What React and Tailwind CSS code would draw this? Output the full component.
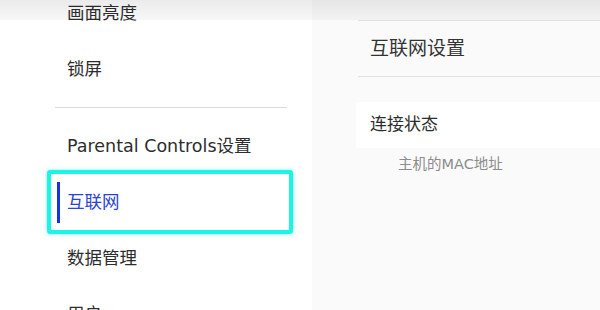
export default function App() {
  const font = { fontFamily: '"DejaVu Sans", "Noto Sans CJK SC", sans-serif' };

  return (
    <div className="relative w-[600px] h-[310px] overflow-hidden bg-white flex text-[#2d2d2d]" style={font}>
      {/* header fade */}
      <div className="absolute top-0 left-0 right-0 h-[20px] bg-gradient-to-b from-black/[0.08] to-black/[0.03] pointer-events-none z-10" />

      {/* Left menu */}
      <div className="w-[312px] flex flex-col mt-[-15px]">
        <div className="ml-[55px] w-[232px] h-14 shrink-0 flex items-center pl-3 text-[17.5px]">画面亮度</div>
        <div className="ml-[55px] w-[232px] h-14 shrink-0 flex items-center pl-3 text-[17.5px]">锁屏</div>
        <div className="ml-[55px] w-[232px] h-[21px] shrink-0 flex items-center">
          <div className="w-full h-px bg-[#dcdcdc]" />
        </div>
        <div className="ml-[55px] w-[232px] h-14 shrink-0 flex items-center pl-3 text-[17.5px]">Parental Controls设置</div>
        <div className="ml-[47px] w-[246px] h-[64px] -my-[4px] shrink-0 flex items-center pl-[6px] gap-[7px] border-4 border-[#1cf5e6] rounded-[3px] shadow-[0_0_4px_rgba(28,245,230,0.5)]">
          <span className="w-[3px] h-[41px] bg-[#1432e6]" />
          <span className="text-[17.5px] text-[#2a44d6]">互联网</span>
        </div>
        <div className="ml-[55px] w-[232px] h-14 shrink-0 flex items-center pl-3 text-[17.5px]">数据管理</div>
        <div className="ml-[55px] w-[232px] h-14 shrink-0 flex items-center pl-3 text-[17.5px]">用户</div>
      </div>

      {/* Right panel */}
      <div className="flex-1 bg-[#fafafa] flex flex-col">
        <div className="ml-[46px] mt-[20px] h-[57px] border-y border-[#e2e2e2] flex items-center pl-3 text-[19px] text-[#333]">
          互联网设置
        </div>
        <div className="ml-[44px] mt-[25px] h-[46px] bg-white flex items-center pl-[14px] text-[17px] text-[#2d2d2d]">
          连接状态
        </div>
        <div className="ml-[86px] mt-[6px] text-[14.5px] text-[#8c8c8c]">主机的MAC地址</div>
      </div>
    </div>
  );
}
